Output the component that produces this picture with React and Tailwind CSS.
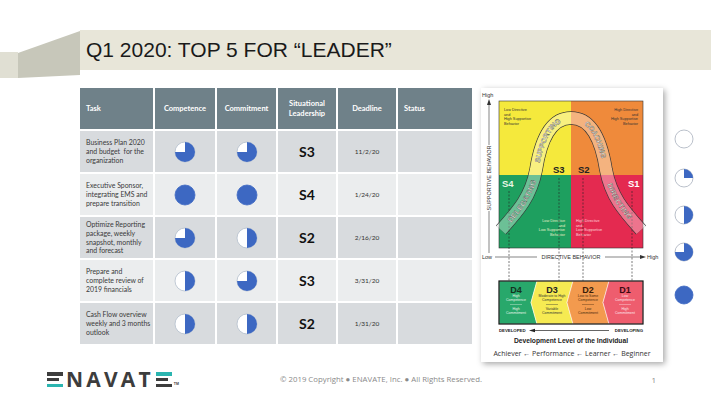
import React from "react";

const BLUE = "#3d68c2";

function Pie({ frac, size = 22, stroke = "#b4bfcd" }) {
  const c = size / 2;
  const r = size / 2 - 1;
  let sector = null;
  if (frac >= 1) {
    sector = <circle cx={c} cy={c} r={r} fill={BLUE} />;
  } else if (frac > 0) {
    const t = frac * 2 * Math.PI;
    const ex = c + r * Math.sin(t);
    const ey = c - r * Math.cos(t);
    const large = frac > 0.5 ? 1 : 0;
    sector = (
      <path
        d={`M ${c} ${c} L ${c} ${c - r} A ${r} ${r} 0 ${large} 1 ${ex.toFixed(2)} ${ey.toFixed(2)} Z`}
        fill={BLUE}
      />
    );
  }
  return (
    <svg width={size} height={size} viewBox={`0 0 ${size} ${size}`}>
      <circle cx={c} cy={c} r={r} fill="#fff" stroke={frac >= 1 ? BLUE : stroke} strokeWidth="0.8" />
      {sector}
    </svg>
  );
}

const rows = [
  { task: "Business Plan 2020\nand budget  for the\norganization", comp: 0.75, commit: 0.75, sl: "S3", date: "11/2/20" },
  { task: "Executive Sponsor,\nintegrating EMS and\nprepare transition", comp: 1, commit: 1, sl: "S4", date: "1/24/20" },
  { task: "Optimize Reporting\npackage, weekly\nsnapshot, monthly\nand forecast", comp: 0.75, commit: 0.5, sl: "S2", date: "2/16/20" },
  { task: "Prepare and\ncomplete review of\n2019 financials", comp: 0.5, commit: 0.75, sl: "S3", date: "3/31/20" },
  { task: "Cash Flow overview\nweekly and 3 months\noutlook", comp: 0.5, commit: 0.5, sl: "S2", date: "1/31/20" },
];

function Table() {
  return (
    <div
      className="grid grid-cols-[73px_60px_59px_58px_58px_74px] gap-[2px] bg-white w-[392px]"
      style={{ fontFamily: "Lato, 'Open Sans', sans-serif" }}
    >
      {["Task", "Competence", "Commitment", "Situational\nLeadership", "Deadline", "Status"].map((h, i) => (
        <div
          key={h}
          className={
            "h-[41px] bg-[#6f8189] text-white font-bold text-[7.5px] leading-[10px] flex items-center whitespace-pre-line " +
            (i === 0 || i === 5 ? "pl-[6px]" : "justify-center text-center")
          }
        >
          {h}
        </div>
      ))}
      {rows.map((r, idx) => {
        const bg = idx % 2 === 0 ? "bg-[#d8dbde]" : "bg-[#ebedee]";
        return (
          <React.Fragment key={idx}>
            <div className={`${bg} h-[41px] flex items-center pl-[6px] text-[6.9px] leading-[8.8px] text-[#3a3a3a] whitespace-pre`}>
              {r.task}
            </div>
            <div className={`${bg} flex items-center justify-center`}>
              <Pie frac={r.comp} />
            </div>
            <div className={`${bg} flex items-center justify-center`}>
              <Pie frac={r.commit} />
            </div>
            <div className={`${bg} flex items-center justify-center text-[14px] font-bold text-[#111]`}>{r.sl}</div>
            <div className={`${bg} flex items-center justify-center text-[6.5px] text-[#333]`}>{r.date}</div>
            <div className={bg}></div>
          </React.Fragment>
        );
      })}
    </div>
  );
}

const BAND = "M 20 142 C 38 122, 50 108, 55 82 C 60 50, 70 30, 90 30 C 110 30, 120 50, 125 82 C 130 108, 142 122, 160 142";

function QText({ x, y, lines, anchor = "start", fill = "#333" }) {
  return (
    <text fontSize="3.8" fill={fill} textAnchor={anchor}>
      {lines.map((l, i) => (
        <tspan key={i} x={x} y={y + i * 4.6}>
          {l}
        </tspan>
      ))}
    </text>
  );
}

function DText({ cx, label, a, b, c, d, fill, sub }) {
  return (
    <g textAnchor="middle">
      <text x={cx} y={204.5} fontSize="9" fontWeight="bold" fill={fill}>
        {label}
      </text>
      <text fontSize="3.5" fill={sub}>
        <tspan x={cx} y={209}>{a}</tspan>
        <tspan x={cx} y={213}>{b}</tspan>
        <tspan x={cx} y={222}>{c}</tspan>
        <tspan x={cx} y={226}>{d}</tspan>
      </text>
      <line x1={cx - 6} y1={216.5} x2={cx + 6} y2={216.5} stroke={sub} strokeWidth="0.4" />
    </g>
  );
}

function Diagram() {
  const lbl = { fontSize: 5.5, fill: "#333" };
  return (
    <svg width="182" height="258" viewBox="0 0 182 258" fontFamily="'Liberation Sans', Arial, sans-serif">
      <defs>
        <path id="band" d={BAND} />
        <mask id="bandMask">
          <rect width="182" height="258" fill="white" />
          <path d={BAND} stroke="black" strokeWidth="12" fill="none" />
        </mask>
      </defs>
      <text x="1" y="9" {...lbl}>High</text>
      <line x1="8" y1="165" x2="8" y2="123" stroke="#333" strokeWidth="0.6" />
      <line x1="8" y1="57" x2="8" y2="15" stroke="#333" strokeWidth="0.6" />
      <polygon points="8,11 6,17 10,17" fill="#333" />
      <text transform="translate(10 90) rotate(-90)" textAnchor="middle" {...lbl}>
        SUPPORTIVE  BEHAVIOR
      </text>

      <rect x="18" y="13" width="72" height="74" fill="#f5e93c" />
      <rect x="90" y="13" width="72" height="74" fill="#ef8a3b" />
      <rect x="18" y="87" width="72" height="73" fill="#1e9f5f" />
      <rect x="90" y="87" width="72" height="73" fill="#e42a50" />
      <rect x="18" y="13" width="144" height="147" fill="none" stroke="#333" strokeWidth="0.6" />

      <QText x={23} y={23} lines={["Low Directive", "and", "High Supportive", "Behavior"]} />
      <QText x={157} y={23} anchor="end" lines={["High Directive", "and", "High Supportive", "Behavior"]} />
      <QText x={84} y={134} anchor="end" fill="#e5efc8" lines={["Low Directive", "and", "Low Supportive", "Behavior"]} />
      <QText x={95} y={134} fill="#ffd2da" lines={["High Directive", "and", "Low Supportive", "Behavior"]} />

      <g stroke="#222" strokeWidth="0.6" strokeDasharray="2 1.5">
        <line x1="28" y1="103" x2="28" y2="193" />
        <line x1="78" y1="90" x2="78" y2="193" />
        <line x1="102" y1="90" x2="102" y2="193" />
        <line x1="151" y1="103" x2="151" y2="193" />
      </g>

      <path d={BAND} stroke="#3a3a3a" strokeWidth="13.5" fill="none" mask="url(#bandMask)" />
      <path d={BAND} stroke="#fff" strokeOpacity="0.35" strokeWidth="12" fill="none" />
      <g fontSize="7.2" fontWeight="bold" fill="#f7f7ee" stroke="#3a3a3a" strokeWidth="0.32" letterSpacing="0.2">
        <text dy="2.6"><textPath href="#band" startOffset="13%" textAnchor="middle">DELEGATING</textPath></text>
        <text dy="2.6"><textPath href="#band" startOffset="37%" textAnchor="middle">SUPPORTING</textPath></text>
        <text dy="2.6"><textPath href="#band" startOffset="63%" textAnchor="middle">COACHING</textPath></text>
        <text dy="2.6"><textPath href="#band" startOffset="87%" textAnchor="middle">DIRECTING</textPath></text>
      </g>

      <g fontSize="9.5" fontWeight="bold">
        <text x="72" y="85" fill="#222">S3</text>
        <text x="97" y="85" fill="#222">S2</text>
        <text x="21" y="99" fill="#e9f5e4">S4</text>
        <text x="147" y="99" fill="#fff">S1</text>
      </g>

      <text x="1" y="171" {...lbl}>Low</text>
      <line x1="14" y1="169" x2="56" y2="169" stroke="#333" strokeWidth="0.6" />
      <text x="90" y="171" textAnchor="middle" {...lbl}>DIRECTIVE  BEHAVIOR</text>
      <line x1="124" y1="169" x2="160" y2="169" stroke="#333" strokeWidth="0.6" />
      <polygon points="165,169 159,167 159,171" fill="#333" />
      <text x="166" y="171" {...lbl}>High</text>

      <g stroke="#fff" strokeWidth="0.5">
        <polygon points="18,193 56,193 50,214.5 56,236 18,236" fill="#28a86b" />
        <polygon points="56,193 92,193 86,214.5 92,236 56,236 50,214.5" fill="#f6ea52" />
        <polygon points="92,193 128,193 122,214.5 128,236 92,236 86,214.5" fill="#f39a4e" />
        <polygon points="128,193 162,193 162,236 128,236 122,214.5" fill="#ee5d6e" />
      </g>
      <rect x="18" y="193" width="144" height="43" fill="none" stroke="#111" strokeWidth="1.2" />
      <DText cx={35} label="D4" a="High" b="Competence" c="High" d="Commitment" fill="#14331f" sub="#e8f6e8" />
      <DText cx={71} label="D3" a="Moderate to High" b="Competence" c="Variable" d="Commitment" fill="#222" sub="#333" />
      <DText cx={107} label="D2" a="Low to Some" b="Competence" c="Low" d="Commitment" fill="#3a1d0a" sub="#4a2a10" />
      <DText cx={144} label="D1" a="Low" b="Competence" c="High" d="Commitment" fill="#3a0a12" sub="#fde6ea" />

      <text x="18" y="244" fontSize="4.3" fontWeight="bold" fill="#222">DEVELOPED</text>
      <line x1="53" y1="242.5" x2="128" y2="242.5" stroke="#222" strokeWidth="0.7" />
      <polygon points="48,242.5 54,240.8 54,244.2" fill="#222" />
      <text x="162" y="244" fontSize="4.3" fontWeight="bold" fill="#222" textAnchor="end">DEVELOPING</text>
      <text x="90" y="254.5" fontSize="6.7" fontWeight="bold" fill="#222" textAnchor="middle">
        Development Level of the Individual
      </text>
    </svg>
  );
}

function LogoE({ top, bottom }) {
  return (
    <div className="w-[16px] h-[15px] flex flex-col justify-between">
      <div className={`h-[3.5px] w-[16px] ${top}`}></div>
      <div className="h-[3.5px] w-[12px] bg-[#3d3d3d]"></div>
      <div className={`h-[3.5px] w-[16px] ${bottom}`}></div>
    </div>
  );
}

export default function App() {
  return (
    <div
      className="w-[711px] h-[400px] bg-white overflow-hidden flex flex-col"
      style={{ fontFamily: "'Liberation Sans', Arial, sans-serif" }}
    >
      <header className="mt-[30px] flex h-[48px]">
        <svg width="80" height="48" viewBox="0 0 80 48" className="shrink-0">
          <polygon points="0,22 18,22 18,48 0,48" fill="#e0dfd3" />
          <polygon points="18,23 80,1 80,45 18,48" fill="#c7c7ba" />
        </svg>
        <div className="flex-1 h-[40px] bg-[#e8e6d9] flex items-center pl-[6px]">
          <span className="text-[21px] text-[#1a1a1a]" style={{ fontFamily: "'Liberation Sans', Arial, sans-serif" }}>
            Q1 2020: TOP 5 FOR “LEADER”
          </span>
        </div>
      </header>

      <main className="mt-[10px] flex items-start">
        <div className="ml-[80px]">
          <Table />
        </div>
        <div className="ml-[9px] w-[182px] h-[274px] bg-white shadow-[2px_2px_6px_rgba(0,0,0,0.35)] flex flex-col">
          <Diagram />
          <div
            className="mt-[3px] text-center text-[7px] text-[#333] leading-[10px]"
            style={{ fontFamily: "'Open Sans', sans-serif" }}
          >
            Achiever ← Performance ← Learner ← Beginner
          </div>
        </div>
        <div className="ml-[11px] flex flex-col">
          <div className="mt-[41px]"><Pie frac={0} size={20} stroke="#a8b0bc" /></div>
          <div className="mt-[19px]"><Pie frac={0.25} size={20} stroke="#a8b0bc" /></div>
          <div className="mt-[17px]"><Pie frac={0.5} size={20} stroke="#a8b0bc" /></div>
          <div className="mt-[17px]"><Pie frac={0.75} size={20} stroke="#a8b0bc" /></div>
          <div className="mt-[23px]"><Pie frac={1} size={20} /></div>
        </div>
      </main>

      <footer className="mt-[9px] flex items-center h-[17px]">
        <div className="w-[280px] shrink-0 pl-[47px] flex items-center">
          <LogoE top="bg-[#3d3d3d]" bottom="bg-[#2bb5b0]" />
          <span
            className="ml-[3px] text-[21px] font-bold text-[#3d3d3d] tracking-[3.2px] leading-[15px]"
            style={{ fontFamily: "'Open Sans', sans-serif" }}
          >
            NAVAT
          </span>
          <div className="ml-[2px]">
            <LogoE top="bg-[#2bb5b0]" bottom="bg-[#3d3d3d]" />
          </div>
          <span className="ml-[2px] self-end text-[3.5px] text-[#3d3d3d] font-bold">TM</span>
        </div>
        <div className="text-[7.8px] text-[#8a8a8a] whitespace-nowrap" style={{ fontFamily: "'Open Sans', sans-serif" }}>
          © 2019 Copyright ● ENAVATE, Inc. ● All Rights Reserved.
        </div>
        <div className="ml-auto mr-[55px] text-[8px] text-[#8a8a8a]" style={{ fontFamily: "'Open Sans', sans-serif" }}>
          1
        </div>
      </footer>
    </div>
  );
}
